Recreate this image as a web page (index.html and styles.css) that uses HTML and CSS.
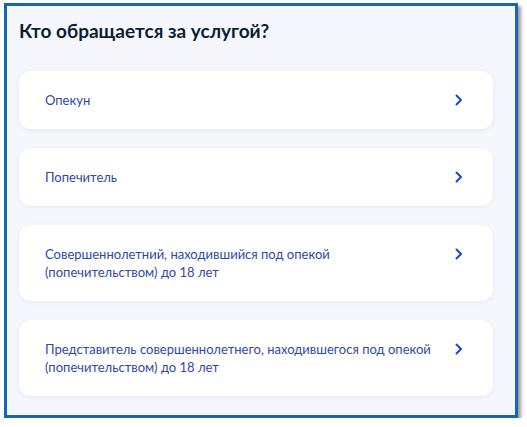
FILE: index.html
```html
<!DOCTYPE html>
<html lang="ru">
<head>
<meta charset="utf-8">
<link rel="stylesheet" href="styles.css">
</head>
<body>
<div class="frame">
  <h1 class="title">Кто обращается за услугой?</h1>
  <div class="list">
    <div class="card">
      <span class="label">Опекун</span>
      <svg class="chev" width="8" height="12" viewBox="0 0 8 12"><path d="M1.5 1.5 L6 6 L1.5 10.5" fill="none" stroke="#0d4cd3" stroke-width="2" stroke-linecap="round" stroke-linejoin="round"/></svg>
    </div>
    <div class="card">
      <span class="label">Попечитель</span>
      <svg class="chev" width="8" height="12" viewBox="0 0 8 12"><path d="M1.5 1.5 L6 6 L1.5 10.5" fill="none" stroke="#0d4cd3" stroke-width="2" stroke-linecap="round" stroke-linejoin="round"/></svg>
    </div>
    <div class="card">
      <span class="label">Совершеннолетний, находившийся под опекой<br>(попечительством) до 18 лет</span>
      <svg class="chev" width="8" height="12" viewBox="0 0 8 12"><path d="M1.5 1.5 L6 6 L1.5 10.5" fill="none" stroke="#0d4cd3" stroke-width="2" stroke-linecap="round" stroke-linejoin="round"/></svg>
    </div>
    <div class="card">
      <span class="label">Представитель совершеннолетнего, находившегося под опекой<br>(попечительством) до 18 лет</span>
      <svg class="chev" width="8" height="12" viewBox="0 0 8 12"><path d="M1.5 1.5 L6 6 L1.5 10.5" fill="none" stroke="#0d4cd3" stroke-width="2" stroke-linecap="round" stroke-linejoin="round"/></svg>
    </div>
  </div>
</div>
</body>
</html>
```

FILE: styles.css
```css
html, body {
  margin: 0;
  padding: 0;
  background: #ffffff;
}
body {
  font-family: Lato, "Noto Sans", sans-serif;
}
.frame {
  box-sizing: border-box;
  margin: 3px 0 0 4px;
  width: 514px;
  height: 415px;
  border: 3px solid #1566ae;
  background: #f5f7fc;
  box-shadow: 3px 3px 3px rgba(40, 40, 40, 0.45);
  padding: 13px 22px 0 12px;
}
.title {
  margin: 0;
  font-size: 19px;
  line-height: 24px;
  font-weight: 700;
  color: #0b1f33;
}
.list {
  margin-top: 28px;
  display: flex;
  flex-direction: column;
  gap: 19px;
}
.card {
  background: #ffffff;
  border-radius: 12px;
  box-shadow: 0 1px 4px rgba(30, 60, 120, 0.08);
  padding: 20px 30px 20px 26px;
  display: flex;
  justify-content: space-between;
  align-items: flex-start;
}
.label {
  font-size: 13px;
  line-height: 18px;
  color: #2f48a8;
}
.chev {
  margin-top: 3px;
  flex: none;
}
```
